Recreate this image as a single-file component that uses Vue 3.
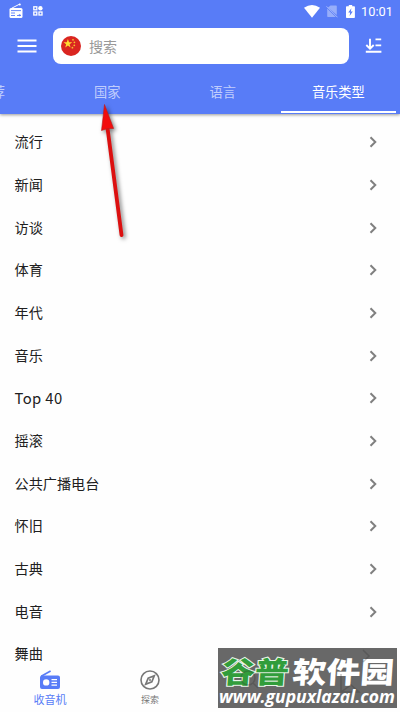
<script setup>
const tabs = ['推荐', '国家', '语言', '音乐类型']
const genres = ['流行', '新闻', '访谈', '体育', '年代', '音乐', 'Top 40', '摇滚', '公共广播电台', '怀旧', '古典', '电音', '舞曲']
</script>

<template>
  <div class="screen">
    <header class="header">
      <div class="status">
        <svg class="st-radio" width="14" height="16" viewBox="0 0 14 16">
          <path d="M2.5 5.3 10.5 1.2" stroke="#fff" stroke-width="1" />
          <circle cx="10.8" cy="1.4" r="1" fill="#fff" />
          <rect x=".5" y="5" width="13" height="10" rx="1.5" fill="#fff" />
          <path d="M2 7.6h10M2 10h4M2 12.5h4M8 12.5h4" stroke="#587cf7" stroke-width=".9" />
          <circle cx="10.6" cy="12.3" r="1" fill="#587cf7" />
        </svg>
        <svg class="st-grid" width="10" height="10" viewBox="0 0 10 10">
          <g fill="none" stroke="#fff" stroke-width="1.3">
            <rect x=".8" y=".8" width="3" height="3" />
            <rect x=".8" y="6" width="3" height="3" />
            <rect x="6" y="6" width="3" height="3" />
          </g>
          <circle cx="7.4" cy="2.3" r="2.2" fill="#fff" />
        </svg>
        <span class="grow"></span>
        <svg width="16" height="13" viewBox="0 0 16 13"><path d="M0 2.8Q8-2.8 16 2.8L8 12.7Z" fill="#fff" /></svg>
        <svg class="st-sim" width="12" height="13" viewBox="0 0 12 13">
          <path d="M4.5.5H10q.8 0 .8.8v8.8L2 2.5ZM1.2 3.5 9.8 12H2q-.8 0-.8-.8Z" fill="#fff" opacity=".38" />
          <path d="m.5 1.3 11 11" stroke="#fff" stroke-width="1" opacity=".45" />
        </svg>
        <svg class="st-bat" width="9" height="13" viewBox="0 0 9 13">
          <path d="M.8 1.3h2V0h3.4v1.3h2q.7 0 .7.7v10.2q0 .8-.8.8H.8q-.8 0-.8-.8V2q0-.7.8-.7Z" fill="#fff" />
          <path d="M5.4 3.2 2.2 7.6h2L3.6 11l3.2-4.6h-2Z" fill="#587cf7" />
        </svg>
        <time class="clock">10:01</time>
      </div>
      <div class="toolbar">
        <svg class="menu" width="20" height="14" viewBox="0 0 20 14"><path d="M.5 1.5h19M.5 7h19M.5 12.5h19" stroke="#fff" stroke-width="2" /></svg>
        <div class="search">
          <svg width="20" height="20" viewBox="0 0 20 20">
            <circle cx="10" cy="10" r="10" fill="#da2520" />
            <path d="m6.9 3 1.1 3.2h3.3L8.600 8.200l1 3.200L6.900 9.400l-2.700 2 1-3.200-2.700-2h3.300Z" fill="#ffdc30" />
            <g fill="#f5c12c"><circle cx="12" cy="3.8" r=".9" /><circle cx="13.4" cy="6.3" r=".9" /><circle cx="13.3" cy="9.3" r=".9" /><circle cx="11.4" cy="11.7" r=".9" /></g>
          </svg>
          <span>搜索</span>
        </div>
        <svg class="sort" width="18" height="16" viewBox="0 0 18 16">
          <path d="M5 .7v10M1.3 7 5 10.6 8.7 7M10.5 1.4h5.7M10.5 7.4h5.7M.8 13.8h15.6" fill="none" stroke="#fff" stroke-width="1.9" />
        </svg>
      </div>
      <nav class="tabs">
        <div v-for="(t, i) in tabs" :key="t" class="tab" :class="{ active: i === 3 }">{{ t }}</div>
      </nav>
    </header>

    <ul class="list">
      <li v-for="g in genres" :key="g">
        <span :class="{ latin: g === 'Top 40' }">{{ g }}</span>
        <svg width="8" height="12" viewBox="0 0 8 12"><path d="m1.500 1.200 4.800 4.800-4.800 4.800" fill="none" stroke="#808080" stroke-width="2" /></svg>
      </li>
    </ul>

    <footer class="bottom">
      <div class="nav on">
        <svg width="20" height="20" viewBox="0 0 20 20">
          <path d="M1.2 6.3 10.6 1" stroke="#587cf7" stroke-width="1.6" />
          <path fill-rule="evenodd" d="M2 5.5h16q2 0 2 2V17q0 2-2 2H2q-2 0-2-2V7.500q0-2 2-2ZM6.200 9.200a3.200 3.200 0 1 0 0 6.400 3.200 3.200 0 0 0 0-6.400ZM11.500 9v1.300H17V9Zm0 2.700V13H17v-1.300Zm0 2.700v1.300H17v-1.300Z" fill="#587cf7" />
        </svg>
        <span>收音机</span>
      </div>
      <div class="nav">
        <svg width="20" height="20" viewBox="0 0 20 20">
          <circle cx="10" cy="10" r="9" fill="none" stroke="#777" stroke-width="1.6" />
          <path d="M14.300 5.700 11.800 11.800 5.700 14.300 8.200 8.200Z" fill="none" stroke="#777" stroke-width="1.7" />
          <circle cx="10" cy="10" r="1" fill="#777" />
        </svg>
        <span>探索</span>
      </div>
    </footer>

    <svg class="arrow" width="50" height="150" viewBox="0 0 50 150">
      <path d="M12.500 32 26.500 139" stroke="#dc1010" stroke-width="3.800" stroke-linecap="round" />
      <path d="M9.500 8.500 18.600 32.500 12.800 32.500 6.500 34.500Z" fill="#f20c0c" stroke="#b91c1c" stroke-width=".6" />
    </svg>

    <div class="watermark">
      <svg width="179" height="60" viewBox="0 0 179 60">
        <g class="brand" transform="translate(0 35) skewX(-4) scale(.97 .84)">
          <text class="green" x="2.500" y="0">谷普</text>
          <text class="white" x="76" y="0">软件园</text>
        </g>
        <g class="under" fill="none" stroke="#333" stroke-width="1.500">
          <circle cx="30" cy="30" r="7" /><path d="m35 35 5 5M123 44l10-7 8 7ZM123 26v18M145 2l6 6-6 6" />
        </g>
        <text class="url" x="1" y="54.500" textLength="176" lengthAdjust="spacingAndGlyphs">www.gupuxlazal.com</text>
      </svg>
    </div>
  </div>
</template>

<style>
body { margin: 0; overflow: hidden; }
</style>

<style scoped>
* { box-sizing: border-box; }
svg { display: block; flex: none; }
.screen { position: relative; display: flex; flex-direction: column; width: 400px; height: 712px; overflow: hidden; background: #fefefe; font-family: Roboto, "Noto Sans CJK SC", sans-serif; }
.header { flex: none; height: 114px; background: #587cf7; color: #fff; box-shadow: 0 1px 3px rgba(0, 0, 0, .4); }
.status { display: flex; align-items: center; height: 22px; padding: 0 7px 0 9px; }
.st-grid { margin-left: 10px; }
.grow { flex: 1; }
.st-sim { margin-left: 6px; }
.st-bat { margin-left: 8px; }
.clock { margin-left: 6px; width: 32px; font-size: 12.800px; line-height: 23px; }
.toolbar { display: flex; align-items: center; height: 48px; padding: 0 16px 0 17px; }
.search { display: flex; align-items: center; width: 296px; height: 36px; margin: 0 16px; padding: 0 0 0 8px; gap: 8px; border-radius: 8px; background: #fff; color: #999; font-size: 14px; }
.search span { margin-top: -1px; }
.tabs { display: flex; height: 44px; margin-left: -66px; }
.tab { flex: none; width: 115.500px; height: 43px; text-align: center; font-size: 13.200px; line-height: 45px; color: rgba(255, 255, 255, .65); }
.tab.active { color: #fff; border-bottom: 2px solid #fff; }
.list { flex: none; list-style: none; margin: 0; padding: 7px 23px 0 14.500px; }
.list li { display: flex; align-items: center; justify-content: space-between; height: 42.670px; font-size: 14.150px; color: #202020; }
.list span { margin-top: -2px; }
.list .latin { margin-top: -2px; font-family: "Noto Sans CJK SC", sans-serif; font-size: 14.800px; letter-spacing: .4px; }
.bottom { position: absolute; left: 0; bottom: 0; display: flex; width: 400px; height: 44px; }
.nav { display: flex; flex-direction: column; align-items: center; width: 100px; padding-top: 2px; color: #777; font-size: 9px; line-height: 15px; }
.nav span { margin-top: 3px; }
.nav.on { color: #587cf7; font-size: 11px; font-weight: 400; }
.arrow { position: absolute; left: 95px; top: 96px; filter: drop-shadow(2px 2px 2px rgba(0, 0, 0, .5)); }
.watermark { position: absolute; left: 218px; top: 648px; width: 179px; height: 60px; background: #686868; }
.brand { font: 900 35px "Noto Sans CJK SC", sans-serif; }
.green { fill: #319d3b; stroke: #e9f5e9; stroke-width: 2.500px; paint-order: stroke; }
.white { fill: #fff; }
.under { opacity: .28; }
.url { font: italic 700 17px "Open Sans", sans-serif; fill: #fff; }
</style>
